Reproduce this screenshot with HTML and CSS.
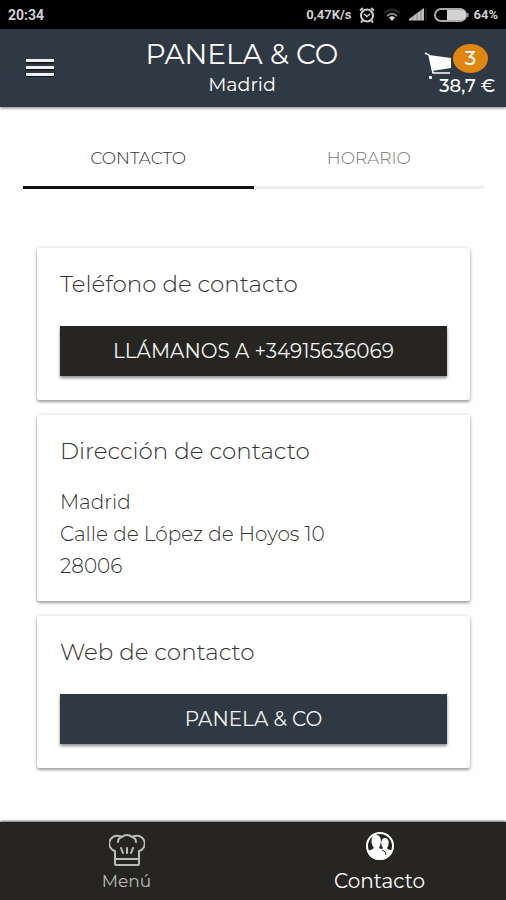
FILE: index.html
```html
<!DOCTYPE html>
<html lang="es">
<head>
<meta charset="utf-8">
<meta name="viewport" content="width=device-width, initial-scale=1">
<title>Panela &amp; Co</title>
<link rel="stylesheet" href="styles.css">
</head>
<body>
<div class="status">
  <span class="clock">20:34</span>
  <span>0,47K/s</span>
  <svg class="alarm" viewBox="0 0 16 16" width="16" height="16" fill="none" stroke="currentColor" stroke-width="2"><circle cx="8" cy="8.5" r="6"/><path d="M1 3.5 4 1M15 3.5 12 1M3.5 13.500 2 15.500M12.500 13.500 14 15.500"/><path d="M5 7l3 2.500L11 7" stroke-width="1.500"/></svg>
  <svg class="wifi" viewBox="0 0 18 14" width="18" height="14" fill="none"><path d="M1 5Q9-2 17 5" stroke="#2c2c2c" stroke-width="2"/><path d="M4 8Q9 3.500 14 8" stroke="#888" stroke-width="2"/><path d="M6 9.500Q9 7 12 9.500L9 13z" fill="#ddd"/></svg>
  <svg class="signal" viewBox="0 0 18 13" width="18" height="13"><path d="M0 12.500V11L15 0v12.500z" fill="#bdbdbd"/><path d="M4 8v5M8 5v8M12 2v11" stroke="#777" stroke-width=".7"/><path d="M17 0v13" stroke="#333"/></svg>
  <svg class="battery" viewBox="0 0 35 14" width="35" height="14"><rect x="1" y="1" width="31" height="12" rx="6" fill="none" stroke="#aaa" stroke-width="2"/><path d="M13 2h14q5 0 5 5t-5 5H13z" fill="#d2d2d2"/><path d="M33.500 5v4" stroke="#999" stroke-width="2"/></svg>
  <span>64%</span>
</div>
<header class="bar">
  <button class="menu" type="button" aria-label="Abrir menú"><svg viewBox="0 0 28 18" width="28" height="18" fill="none"><path d="M0 3.500h28M0 10.500h28M0 17h28" stroke="#10151b" stroke-width="2"/><path d="M0 1.500h28M0 8.500h28M0 15.500h28" stroke="#eef1f3" stroke-width="3"/></svg></button>
  <div class="brand"><h1>PANELA &amp; CO</h1><p>Madrid</p></div>
  <button class="cart" type="button" aria-label="Carrito, 3 artículos, 38,7 €">
    <svg viewBox="0 0 30 30" width="30" height="30"><path d="M1 2l4 2 4 18h17" fill="none" stroke="#fff" stroke-width="1.500"/><path d="M5 4l22 3v10L8 20z" fill="#fff"/><rect x="5" y="25" width="3" height="3" rx="1" fill="#fff"/></svg>
    <span class="badge">3</span>
    <span class="total">38,7 €</span>
  </button>
</header>
<main>
  <nav class="tabs">
    <a class="tab active" href="#contacto" aria-current="page">CONTACTO</a>
    <a class="tab" href="#horario">HORARIO</a>
  </nav>
  <div class="cards" id="contacto">
    <section class="card"><h2>Teléfono de contacto</h2><a class="action" href="tel:+34915636069">LLÁMANOS A +34915636069</a></section>
    <section class="card place"><h2>Dirección de contacto</h2><address>Madrid<br>Calle de López de Hoyos 10<br>28006</address></section>
    <section class="card"><h2>Web de contacto</h2><a class="action web" href="#web">PANELA &amp; CO</a></section>
  </div>
</main>
<nav class="bottom">
  <a href="#menu">
    <svg viewBox="0 0 36 36" width="36" height="36" fill="none" stroke="currentColor" stroke-width="2" stroke-linecap="round" stroke-linejoin="round"><path d="M6 33V20A7.500 7.500 0 0 1 10 5Q12 5 13 6A7 7 0 0 1 23 6Q24 5 26 5A7.500 7.500 0 0 1 30 20V33q0 1-1 1H7q-1 0-1-1zM6 28h24M9 11q0-4 4-5M27 11q0-4-4-5M12 17l2 5M18 17v5M24 17l-2 5"/></svg>
    <span>Menú</span>
  </a>
  <a class="current" href="#contacto" aria-current="page">
    <svg class="people" viewBox="0 0 30 30" width="30" height="30"><circle cx="15" cy="15" r="13" fill="#24231f" stroke="#fff" stroke-width="2"/><path d="M2 20q5-1 7-3c-4-5-3-13 2-13 6 0 6 8 3 13l2 1q2 0 2-1c-3-4-2-10 2-10s5 6 2 10q1 2 5 2-3 10-12 10-10 0-13-9z" fill="#fff"/><path d="M17 19q4 1 4 5" fill="none" stroke="#24231f"/></svg>
    <span>Contacto</span>
  </a>
</nav>
</body>
</html>
```
FILE: styles.css
```css
* { box-sizing: border-box; }
body {
  display: flex;
  flex-direction: column;
  min-height: 100vh;
  margin: 0;
  background: #fefefe;
  color: #333;
  font-family: Montserrat, Inter, sans-serif;
}
h1, h2, p { margin: 0; font-weight: 300; }
a { color: inherit; text-decoration: none; }
button { padding: 0; border: 0; background: none; color: inherit; font: inherit; }
svg { display: block; flex: none; }

.status {
  display: flex;
  align-items: center;
  height: 29px;
  padding: 0 8px;
  background: #000;
  color: #cfcfcf;
  font: 700 13px Roboto, sans-serif;
}
.clock { margin-right: auto; font-size: 14px; }
.alarm { margin-left: 8px; }
.wifi { margin-left: 8px; }
.signal { margin-left: 8px; }
.battery { margin: 0 4px 0 7px; }

.bar {
  display: grid;
  grid-template-columns: 80px 1fr 102px;
  height: 78px;
  background: #2f3943;
  color: #fff;
  box-shadow: 0 1px 3px #0008;
}
.menu { display: grid; place-items: center; }
.brand { padding-top: 9px; text-align: center; white-space: nowrap; }
.brand h1 { font-size: 28px; line-height: 32px; font-weight: 400; }
.brand p { font-size: 19px; line-height: 30px; font-weight: 400; }
.cart { position: relative; }
.cart svg { position: absolute; top: 22px; right: 52px; }
.badge {
  position: absolute;
  top: 15px;
  right: 18px;
  width: 35px;
  border-radius: 50%;
  background: #df8610;
  font-size: 20px;
  line-height: 29px;
  font-weight: 500;
}
.total {
  position: absolute;
  top: 45px;
  right: 11px;
  font-size: 18px;
  line-height: 24px;
  font-weight: 500;
  white-space: nowrap;
}

main { flex: 1; padding: 23px 22px 52px 23px; }
.tabs { display: grid; grid-template-columns: 1fr 1fr; }
.tab {
  padding: 16px 0;
  border-bottom: 3px solid #ededed;
  color: #777;
  font-size: 17px;
  line-height: 24px;
  font-weight: 300;
  text-align: center;
}
.tab.active { border-color: #111; color: #333; }
.cards { display: grid; gap: 15px; padding: 59px 14px 0; }
.card {
  padding: 23px 23px 24px;
  border-radius: 2px;
  background: #fff;
  box-shadow: 0 2px 3px #0005, 0 0 4px #0002;
}
.card.place { padding-bottom: 19px; }
.card h2 { font-size: 23px; line-height: 26px; }
.action {
  display: block;
  margin-top: 29px;
  background: #262521;
  color: #f2f2f2;
  box-shadow: 0 2px 3px #0007;
  font-size: 20px;
  line-height: 50px;
  text-align: center;
}
.action.web { background: #2f3943; }
address { margin-top: 22px; font-size: 20px; line-height: 32px; font-style: normal; font-weight: 300; }

.bottom {
  display: grid;
  grid-template-columns: 1fr 1fr;
  height: 78px;
  background: #262521;
  color: #bbb;
  box-shadow: 0 -1px 2px #0009;
  font-size: 17px;
}
.bottom a { display: flex; flex-direction: column; align-items: center; padding-top: 9px; }
.bottom span { line-height: 28px; }
.bottom .current { color: #fff; font-size: 20px; }
.people { margin: 0 0 6px; }
```
